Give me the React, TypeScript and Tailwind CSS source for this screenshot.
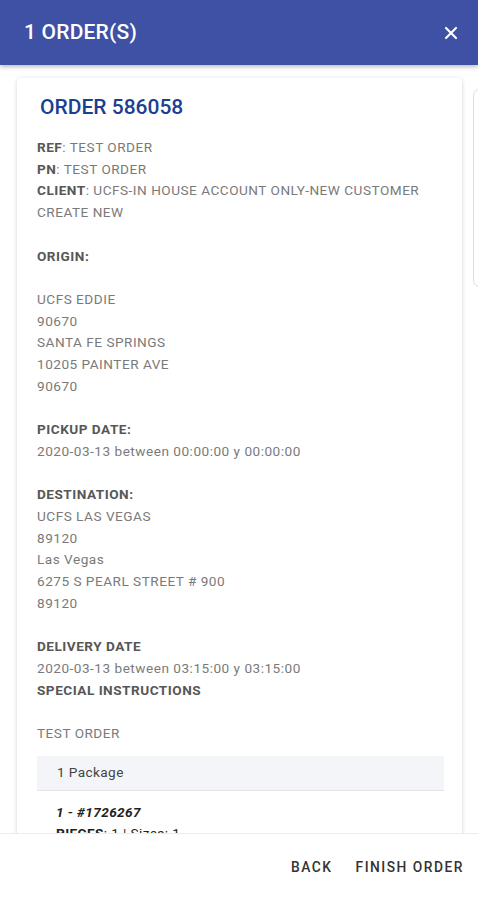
import { X } from 'lucide-react';

const Label = ({ children }: { children: React.ReactNode }) => (
  <span className="font-bold text-[#575757]">{children}</span>
);

export default function App() {
  return (
    <div
      className="flex h-[900px] w-[478px] flex-col overflow-hidden bg-white"
      style={{ fontFamily: 'Roboto, "Noto Sans", sans-serif' }}
    >
      <header className="flex h-[65px] shrink-0 items-center justify-between bg-[#3f51a5] pl-6 pr-[17px] shadow-[0_2px_4px_rgba(0,0,0,0.25)]">
        <h1 className="text-[21px] font-medium tracking-[0.2px] text-white">1 ORDER(S)</h1>
        <X className="h-[20px] w-[20px] text-white" strokeWidth={2.6} />
      </header>

      <main className="relative flex-1 overflow-hidden">
        <div className="absolute left-[473px] top-[23px] h-[200px] w-[40px] rounded-lg border border-[#dedede] bg-white" />
        <div className="ml-[17px] mt-[13px] w-[445px] rounded-sm bg-white pb-6 pl-5 pr-[18px] pt-[14px] shadow-[0_1px_4px_rgba(0,0,0,0.18)]">
          <h2 className="pl-[3px] text-[21px] font-medium leading-[30px] text-[#1b3f91]">ORDER 586058</h2>
          <div className="mt-[15px] text-[13.6px] leading-[21.7px] tracking-[0.5px] text-[#7a7a7a]">
            <p><Label>REF</Label>: TEST ORDER</p>
            <p><Label>PN</Label>: TEST ORDER</p>
            <p className="whitespace-nowrap">
              <Label>CLIENT</Label>: UCFS-IN HOUSE ACCOUNT ONLY-NEW CUSTOMER
            </p>
            <p>CREATE NEW</p>
            <p>&nbsp;</p>
            <p><Label>ORIGIN:</Label></p>
            <p>&nbsp;</p>
            <p>UCFS EDDIE</p>
            <p>90670</p>
            <p>SANTA FE SPRINGS</p>
            <p>10205 PAINTER AVE</p>
            <p>90670</p>
            <p>&nbsp;</p>
            <p><Label>PICKUP DATE:</Label></p>
            <p>2020-03-13 between 00:00:00 y 00:00:00</p>
            <p>&nbsp;</p>
            <p><Label>DESTINATION:</Label></p>
            <p>UCFS LAS VEGAS</p>
            <p>89120</p>
            <p>Las Vegas</p>
            <p>6275 S PEARL STREET # 900</p>
            <p>89120</p>
            <p>&nbsp;</p>
            <p><Label>DELIVERY DATE</Label></p>
            <p>2020-03-13 between 03:15:00 y 03:15:00</p>
            <p><Label>SPECIAL INSTRUCTIONS</Label></p>
            <p>&nbsp;</p>
            <p>TEST ORDER</p>
          </div>
          <div className="mt-[11px] flex h-[35px] items-center border-b border-[#e2e4e8] bg-[#f3f5f8] pl-5 text-[13.6px] tracking-[0.4px] text-[#444]">
            1 Package
          </div>
          <div className="mt-[11px] pl-[19px] text-[13.6px] leading-[21.7px] tracking-[0.4px] text-[#222]">
            <p className="font-bold italic">1 - #1726267</p>
            <p><span className="font-bold">PIECES</span>: 1 | Sizes: 1</p>
          </div>
        </div>
      </main>

      <footer className="flex h-[67px] shrink-0 items-center justify-end gap-[23px] border-t border-[#ececec] bg-white pr-[14px]">
        <button className="text-[13.8px] font-medium tracking-[1.5px] text-[#333]">BACK</button>
        <button className="text-[13.8px] font-medium tracking-[1.5px] text-[#333]">FINISH ORDER</button>
      </footer>
    </div>
  );
}
